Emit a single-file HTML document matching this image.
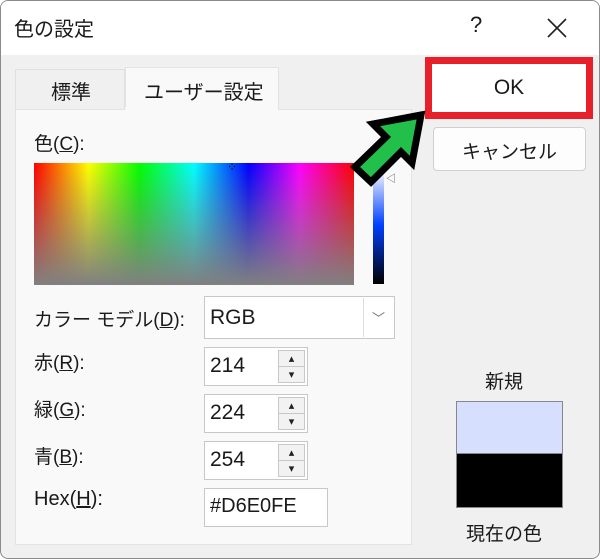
<!DOCTYPE html>
<html><head><meta charset="utf-8"><style>
*{margin:0;padding:0;box-sizing:border-box}
body{width:600px;height:559px;overflow:hidden;background:#fff;font-family:"Liberation Sans","Noto Sans CJK JP",sans-serif;color:#1a1a1a;position:relative}
.a{position:absolute}
.win{left:0;top:0;width:600px;height:559px;border:1px solid #8a8a8a;border-radius:8px;background:#f0f0f0;overflow:hidden}
.title{left:0;top:0;width:600px;height:54px;background:#fff}
.lbl{font-size:19px;position:absolute;left:33px}
.box{position:absolute;background:#fff;border:1px solid #c8c8c8}
.num{font-size:21px;position:absolute;left:5px;top:6px}
.spin{position:absolute;right:2px;top:2px;width:27px;bottom:2px;border:1px solid #c8c8c8;background:#f2f2f2}
.spin div{height:50%;display:flex;align-items:center;justify-content:center;font-size:11px;color:#222}
.spin div:first-child{border-bottom:1px solid #c8c8c8}
</style></head><body>
<div class="a win">
<div class="a title"></div>
<div class="a" style="left:13px;top:12px;font-size:20px">色の設定</div>
<div class="a" style="left:469px;top:11px;font-size:22px">?</div>
<svg class="a" style="left:545px;top:16px" width="22" height="22"><path d="M2 2L20 20M20 2L2 20" stroke="#222" stroke-width="1.6"/></svg>
<!-- tabs -->
<div class="a" style="left:14px;top:68px;width:110px;height:40px;background:#f0f0f0;border:1px solid #e0e0e0;border-bottom:none"></div>
<div class="a" style="left:50px;top:75px;font-size:20px">標準</div>
<div class="a" style="left:124px;top:66px;width:154px;height:44px;background:#f9f9f9;border:1px solid #e3e3e3;border-bottom:none"></div>
<div class="a" style="left:143px;top:75px;font-size:20px">ユーザー設定</div>
<div class="a" style="left:14px;top:108px;width:397px;height:436px;background:#f9f9f9;border:1px solid #e3e3e3"></div>
<div class="a" style="left:124px;top:106px;width:153px;height:5px;background:#f9f9f9"></div>
<div class="lbl" style="top:128px">色(<u>C</u>):</div>
<div class="a" style="left:33px;top:162px;width:320px;height:122px;background:linear-gradient(to bottom,rgba(128,128,128,0),rgba(128,128,128,1)),linear-gradient(to right,#f00,#ff0 17%,#0f0 33%,#0ff 50%,#00f 67%,#f0f 83%,#f00)"></div>
<div class="a" style="left:226px;top:160px;font-size:12px;color:#000;line-height:1">⁘</div>
<div class="a" style="left:372px;top:165px;width:11px;height:118px;background:linear-gradient(to bottom,#fff,#d6e0fe 10%,#0040ff 50%,#000)"></div>
<div class="a" style="left:385px;top:169px;font-size:10px;color:#555">◁</div>
<div class="lbl" style="top:304px">カラー モデル(<u>D</u>):</div>
<div class="box" style="left:203px;top:295px;width:191px;height:43px"><div class="num" style="top:9px">RGB</div><div class="a" style="right:1px;top:1px;width:30px;bottom:1px;border-left:1px solid #ddd;text-align:center;color:#777;font-size:13px;padding-top:10px">﹀</div></div>
<div class="lbl" style="top:347px">赤(<u>R</u>):</div>
<div class="box" style="left:203px;top:346px;width:104px;height:39px"><div class="num">214</div><div class="spin"><div>▴</div><div>▾</div></div></div>
<div class="lbl" style="top:394px">緑(<u>G</u>):</div>
<div class="box" style="left:203px;top:393px;width:104px;height:39px"><div class="num">224</div><div class="spin"><div>▴</div><div>▾</div></div></div>
<div class="lbl" style="top:441px">青(<u>B</u>):</div>
<div class="box" style="left:203px;top:440px;width:104px;height:39px"><div class="num">254</div><div class="spin"><div>▴</div><div>▾</div></div></div>
<div class="lbl" style="top:487px;font-size:20px">Hex(<u>H</u>):</div>
<div class="box" style="left:203px;top:487px;width:124px;height:39px"><div class="num" style="font-size:20px">#D6E0FE</div></div>
<!-- buttons -->
<div class="a" style="left:424px;top:56px;width:168px;height:62px;border:7px solid #e8202a;background:#fff"></div>
<div class="a" style="left:424px;top:75px;width:168px;text-align:center;font-size:21px">OK</div>
<div class="a" style="left:432px;top:126px;width:153px;height:44px;background:#fdfdfd;border:1px solid #d0d0d0;border-radius:4px;text-align:center;font-size:19px;padding-top:9px">キャンセル</div>
<div class="a" style="left:484px;top:366px;font-size:19px">新規</div>
<div class="a" style="left:455px;top:400px;width:107px;height:107px;border:1px solid #888;background:#000"><div style="height:52px;background:#d6e0fe;border-bottom:1px solid #888"></div></div>
<div class="a" style="left:465px;top:518px;font-size:19px">現在の色</div>
<svg class="a" style="left:0;top:0" width="600" height="559"><polygon points="420,114 372,123 385,136 354,166 370,181 400,151 411,162" fill="#22c04a" stroke="#000" stroke-width="7" stroke-linejoin="miter"/></svg>
</div>
</body></html>
